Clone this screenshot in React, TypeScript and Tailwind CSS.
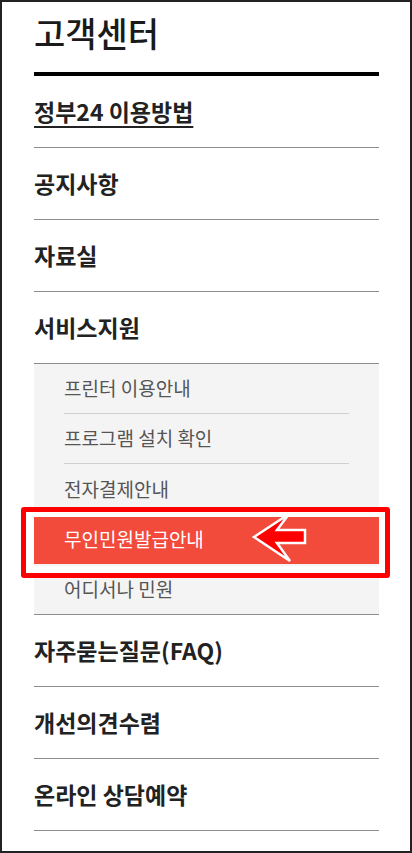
const font = {
  fontFamily: '"Noto Sans CJK KR", "Noto Sans", sans-serif',
};

const mainTop = ["공지사항", "자료실", "서비스지원"];
const mainBottom = ["자주묻는질문(FAQ)", "개선의견수렴", "온라인 상담예약"];

function MainItem({ label, underline }: { label: string; underline?: boolean }) {
  return (
    <div className="flex h-[72px] items-center border-b border-[#8c8c8c]">
      <span
        className={`text-[23px] font-bold text-[#222] ${
          underline ? "underline decoration-[2px] underline-offset-[5px]" : ""
        }`}
      >
        {label}
      </span>
    </div>
  );
}

function SubItem({ label, last }: { label: string; last?: boolean }) {
  return (
    <div className="px-[30px]">
      <div
        className={`flex h-[50px] items-center text-[19px] text-[#555] ${
          last ? "" : "border-b border-[#d0d0d0]"
        }`}
      >
        {label}
      </div>
    </div>
  );
}

function LeftArrow() {
  return (
    <svg width="58" height="50" viewBox="0 0 58 50" className="block">
      <polygon
        points="2,24 37,1 25,17 53,17 53,30 25,30 38,48"
        fill="#ff0000"
        stroke="#ffffff"
        strokeWidth="2.5"
        strokeLinejoin="miter"
      />
    </svg>
  );
}

export default function App() {
  return (
    <div
      style={font}
      className="box-border h-[853px] w-[412px] overflow-hidden border-2 border-[#222] bg-white pl-[32px] pr-[31px]"
    >
      {/* Header */}
      <h1 className="pt-[10px] text-[34px] font-medium leading-[42px] text-[#1a1a1a]">
        고객센터
      </h1>
      <div className="mt-[18px] h-[4px] bg-black" />

      {/* Menu */}
      <MainItem label="정부24 이용방법" underline />
      {mainTop.map((label) => (
        <MainItem key={label} label={label} />
      ))}

      {/* Sub menu */}
      <div className="border-b border-[#8c8c8c] bg-[#f4f4f4]">
        <SubItem label="프린터 이용안내" />
        <SubItem label="프로그램 설치 확인" />
        <SubItem label="전자결제안내" last />
        <div className="relative flex h-[50px] items-center bg-[#f24a3b] px-[30px] text-[19px] text-white">
          무인민원발급안내
          <div className="pointer-events-none absolute -bottom-[14px] -left-[13px] -right-[11px] -top-[7px] rounded-[3px] border-[5px] border-[#ff0000]">
            <div className="h-full w-full border-b-[7px] border-l-[6px] border-r-[4px] border-t-[5px] border-white" />
          </div>
          <div className="absolute left-[218px] top-[-1px]">
            <LeftArrow />
          </div>
        </div>
        <SubItem label="어디서나 민원" last />
      </div>

      {mainBottom.map((label) => (
        <MainItem key={label} label={label} />
      ))}
    </div>
  );
}
